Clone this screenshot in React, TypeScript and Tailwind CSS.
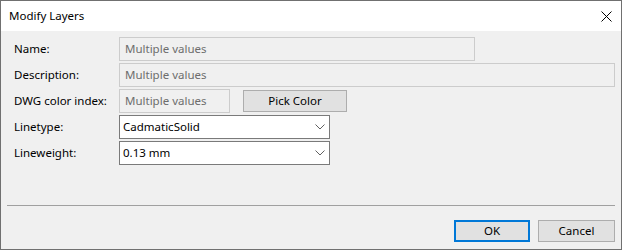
import React from 'react';

const font = { fontFamily: '"Segoe UI", "Noto Sans", "Liberation Sans", sans-serif' };

function Chevron() {
  return (
    <svg width="10" height="6" viewBox="0 0 10 6" className="shrink-0">
      <path d="M0.5 0.5 L5 5 L9.5 0.5" fill="none" stroke="#606060" strokeWidth="1" />
    </svg>
  );
}

function ReadOnlyField({ className }: { className: string }) {
  return (
    <div className={`h-[24px] border border-[#cccccc] bg-[#f0f0f0] pl-[5px] flex items-center text-[#6d6d6d] ${className}`}>
      Multiple values
    </div>
  );
}

function Select({ value }: { value: string }) {
  return (
    <div className="w-[211px] h-[24px] border border-[#7a7a7a] bg-white pl-[3px] pr-[4px] flex items-center justify-between text-black">
      <span>{value}</span>
      <Chevron />
    </div>
  );
}

function Label({ children }: { children: React.ReactNode }) {
  return <div className="w-[105px] shrink-0 text-black">{children}</div>;
}

export default function App() {
  return (
    <div
      className="w-[622px] h-[250px] border border-[#707070] bg-[#f0f0f0] flex flex-col text-[11.5px] leading-none"
      style={font}
    >
      {/* title bar */}
      <div className="h-[30px] bg-white flex items-center justify-between pl-[8px] pr-[8px]">
        <span className="text-[11.5px] text-black">Modify Layers</span>
        <svg width="11" height="11" viewBox="0 0 11 11" className="mr-[1px]">
          <path d="M0.5 0.5 L10.5 10.5 M10.5 0.5 L0.5 10.5" stroke="#000" strokeWidth="1" />
        </svg>
      </div>

      {/* fields */}
      <div className="flex flex-col gap-[2px] pt-[6px] pl-[13px]">
        <div className="flex items-center">
          <Label>Name:</Label>
          <ReadOnlyField className="w-[356px]" />
        </div>
        <div className="flex items-center">
          <Label>Description:</Label>
          <ReadOnlyField className="w-[496px]" />
        </div>
        <div className="flex items-center">
          <Label>DWG color index:</Label>
          <ReadOnlyField className="w-[111px]" />
          <button className="ml-[13px] w-[104px] h-[22px] border border-[#adadad] bg-[#e1e1e1] text-black">
            Pick Color
          </button>
        </div>
        <div className="flex items-center">
          <Label>Linetype:</Label>
          <Select value="CadmaticSolid" />
        </div>
        <div className="flex items-center">
          <Label>Lineweight:</Label>
          <Select value="0.13 mm" />
        </div>
      </div>

      <div className="flex-1" />

      {/* separator + buttons */}
      <div className="mx-[6px] h-px bg-[#a0a0a0]" />
      <div className="flex justify-end gap-[8px] pt-[14px] pb-[7px] pr-[6px]">
        <button className="w-[76px] h-[22px] border-2 border-[#0078d7] bg-[#e1e1e1] text-black">OK</button>
        <button className="w-[77px] h-[22px] border border-[#adadad] bg-[#e1e1e1] text-black">Cancel</button>
      </div>
    </div>
  );
}
